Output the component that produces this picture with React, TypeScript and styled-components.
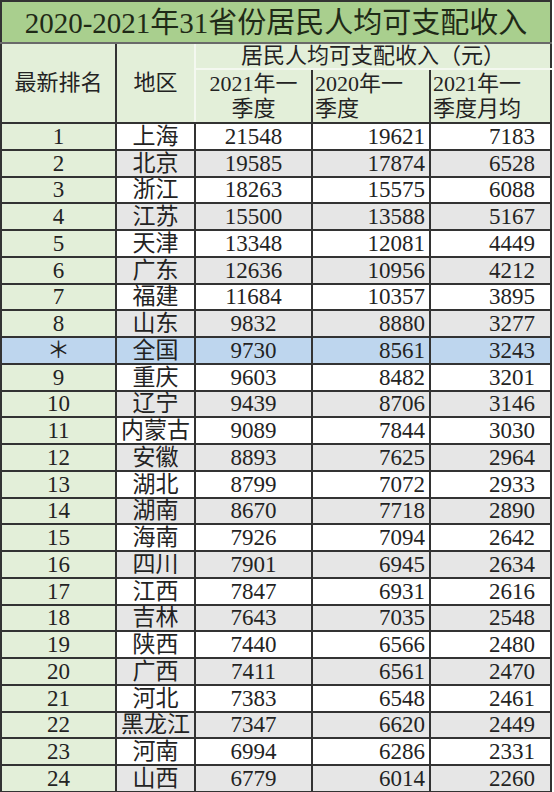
import styled, { createGlobalStyle } from "styled-components";

type Row = [string, string, number, number, number];

const rows: Row[] = [
  ["1", "上海", 21548, 19621, 7183],
  ["2", "北京", 19585, 17874, 6528],
  ["3", "浙江", 18263, 15575, 6088],
  ["4", "江苏", 15500, 13588, 5167],
  ["5", "天津", 13348, 12081, 4449],
  ["6", "广东", 12636, 10956, 4212],
  ["7", "福建", 11684, 10357, 3895],
  ["8", "山东", 9832, 8880, 3277],
  ["＊", "全国", 9730, 8561, 3243],
  ["9", "重庆", 9603, 8482, 3201],
  ["10", "辽宁", 9439, 8706, 3146],
  ["11", "内蒙古", 9089, 7844, 3030],
  ["12", "安徽", 8893, 7625, 2964],
  ["13", "湖北", 8799, 7072, 2933],
  ["14", "湖南", 8670, 7718, 2890],
  ["15", "海南", 7926, 7094, 2642],
  ["16", "四川", 7901, 6945, 2634],
  ["17", "江西", 7847, 6931, 2616],
  ["18", "吉林", 7643, 7035, 2548],
  ["19", "陕西", 7440, 6566, 2480],
  ["20", "广西", 7411, 6561, 2470],
  ["21", "河北", 7383, 6548, 2461],
  ["22", "黑龙江", 7347, 6620, 2449],
  ["23", "河南", 6994, 6286, 2331],
  ["24", "山西", 6779, 6014, 2260],
];

type Tone = "white" | "gray" | "green" | "blue";

const tones: Record<Tone, string> = {
  white: "#ffffff",
  gray: "#e6e6e6",
  green: "#e3efd9",
  blue: "#bed6ee",
};

const App = () => {
  let odd = false;
  return (
    <>
      <GlobalStyle />
      <Table>
        <colgroup>
          <col style={{ width: 115 }} />
          <col style={{ width: 79 }} />
          <col style={{ width: 117 }} />
          <col style={{ width: 118 }} />
          <col style={{ width: 121 }} />
        </colgroup>
        <thead>
          <tr>
            <TitleCell colSpan={5}>2020-2021年31省份居民人均可支配收入</TitleCell>
          </tr>
          <GroupRow>
            <HeadCell rowSpan={2} $lightRight={false}>最新排名</HeadCell>
            <HeadCell rowSpan={2} $lightRight>地区</HeadCell>
            <GroupCell colSpan={3}>居民人均可支配收入（元）</GroupCell>
          </GroupRow>
          <ColRow>
            <SubCell $align="center">2021年一<br />季度</SubCell>
            <SubCell $align="left">2020年一<br />季度</SubCell>
            <SubCell $align="left">2021年一<br />季度月均</SubCell>
          </ColRow>
        </thead>
        <tbody>
          {rows.map(([rank, region, q21, q20, month]) => {
            const national = rank === "＊";
            if (!national) odd = !odd;
            const tone: Tone = national ? "blue" : odd ? "white" : "gray";
            return (
              <DataRow key={region}>
                <Cell $tone={national ? "blue" : "green"} $align="center">
                  {rank}
                </Cell>
                <Cell $tone={tone} $align="center">{region}</Cell>
                <Cell $tone={tone} $align="center">{q21}</Cell>
                <Cell $tone={tone} $align="right" $pad={4}>{q20}</Cell>
                <Cell $tone={tone} $align="right" $pad={15}>{month}</Cell>
              </DataRow>
            );
          })}
        </tbody>
      </Table>
    </>
  );
};

export default App;

const GlobalStyle = createGlobalStyle`
  html, body {
    margin: 0;
    padding: 0;
    overflow: hidden;
    background: #ffffff;
  }
  body {
    font-family: "Liberation Serif", "Noto Sans CJK SC", serif;
    color: #232323;
  }
`;

const Table = styled.table`
  width: 550px;
  table-layout: fixed;
  border-collapse: collapse;
  border: 2px solid #333;
  font-size: 23px;
  line-height: 1;
`;

const TitleCell = styled.th`
  height: 38px;
  padding: 2px 0 0;
  background: #a9cf8e;
  font-size: 29px;
  font-weight: normal;
  text-align: center;
  white-space: nowrap;
  border-bottom: 2px solid #6a6a6a;
  color: #1f2a17;
`;

const GroupRow = styled.tr`
  height: 26px;
`;

const ColRow = styled.tr`
  height: 54px;
`;

const HeadCell = styled.th<{ $lightRight: boolean }>`
  padding: 0;
  background: #e3efd9;
  font-size: 22px;
  font-weight: normal;
  text-align: center;
  border-right: 2px solid ${({ $lightRight }) => ($lightRight ? "#f4f8f0" : "#333")};
  border-bottom: 2px solid #333;
`;

const GroupCell = styled.th`
  padding: 0;
  background: #e3efd9;
  font-size: 22px;
  font-weight: normal;
  text-align: center;
  border-bottom: 2px solid #f4f8f0;
`;

const SubCell = styled.th<{ $align: "left" | "center" }>`
  padding: 0 2px;
  background: #e3efd9;
  font-size: 22px;
  font-weight: normal;
  line-height: 25px;
  white-space: nowrap;
  text-align: ${({ $align }) => $align};
  vertical-align: middle;
  border-left: 2px solid #333;
  border-bottom: 2px solid #333;
`;

const DataRow = styled.tr`
  height: 26.75px;
`;

const Cell = styled.td<{ $tone: Tone; $align: "center" | "right"; $pad?: number }>`
  padding: 0 ${({ $pad }) => $pad ?? 0}px 0 0;
  background: ${({ $tone }) => tones[$tone]};
  text-align: ${({ $align }) => $align};
  border: 2px solid #333;
  white-space: nowrap;
`;
